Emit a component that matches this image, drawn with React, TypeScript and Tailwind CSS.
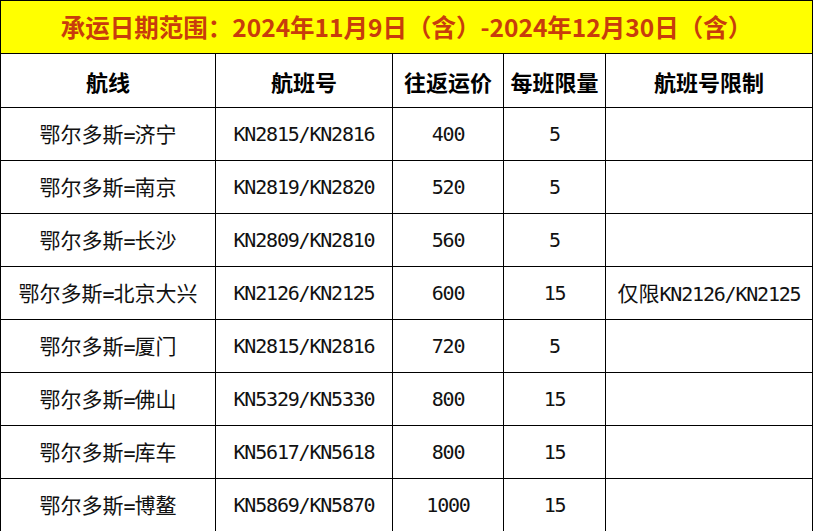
import React from 'react';

interface Route {
  route: string;
  flights: string;
  price: string;
  limit: string;
  note: string;
}

const routes: Route[] = [
  { route: '鄂尔多斯=济宁', flights: 'KN2815/KN2816', price: '400', limit: '5', note: '' },
  { route: '鄂尔多斯=南京', flights: 'KN2819/KN2820', price: '520', limit: '5', note: '' },
  { route: '鄂尔多斯=长沙', flights: 'KN2809/KN2810', price: '560', limit: '5', note: '' },
  { route: '鄂尔多斯=北京大兴', flights: 'KN2126/KN2125', price: '600', limit: '15', note: '仅限KN2126/KN2125' },
  { route: '鄂尔多斯=厦门', flights: 'KN2815/KN2816', price: '720', limit: '5', note: '' },
  { route: '鄂尔多斯=佛山', flights: 'KN5329/KN5330', price: '800', limit: '15', note: '' },
  { route: '鄂尔多斯=库车', flights: 'KN5617/KN5618', price: '800', limit: '15', note: '' },
  { route: '鄂尔多斯=博鳌', flights: 'KN5869/KN5870', price: '1000', limit: '15', note: '' },
];

const headers = ['航线', '航班号', '往返运价', '每班限量', '航班号限制'];

// latin runs get a narrow half-width face, like the source sheet
function Mixed({ text }: { text: string }) {
  const parts = text.split(/([\x00-\x7f]+)/).filter(Boolean);
  return (
    <span className="whitespace-nowrap">
      {parts.map((p, i) =>
        /^[\x00-\x7f]+$/.test(p) ? (
          <span key={i} className="font-['DejaVu_Sans_Mono',monospace] text-[20px] tracking-[-1.2px]">
            {p}
          </span>
        ) : (
          <span key={i}>{p}</span>
        )
      )}
    </span>
  );
}

const cell = 'flex items-center justify-center border-r border-b border-black';

export default function App() {
  return (
    <div className="w-[813px] h-[531px] bg-white font-['Noto_Sans_CJK_SC',sans-serif] text-[#111] overflow-hidden">
      <div className="border-l border-t border-black">
        <div className="h-[53px] flex items-center justify-center bg-[#ffff00] border-r border-b border-black text-[24.5px] font-bold text-[#c83c0c] leading-none">
          承运日期范围：2024年11月9日（含）-2024年12月30日（含）
        </div>
        <div className="grid grid-cols-[215px_177px_111px_102px_1fr]">
          {headers.map((h) => (
            <div key={h} className={`${cell} h-[54px] text-[22px] font-bold leading-none text-black`}>
              {h}
            </div>
          ))}
          {routes.map((r, i) => (
            <React.Fragment key={i}>
              <div className={`${cell} h-[53px] text-[21px] leading-none`}>
                <Mixed text={r.route} />
              </div>
              <div className={`${cell} h-[53px] leading-none`}>
                <Mixed text={r.flights} />
              </div>
              <div className={`${cell} h-[53px] leading-none`}>
                <Mixed text={r.price} />
              </div>
              <div className={`${cell} h-[53px] leading-none`}>
                <Mixed text={r.limit} />
              </div>
              <div className={`${cell} h-[53px] text-[21px] leading-none`}>
                <Mixed text={r.note} />
              </div>
            </React.Fragment>
          ))}
        </div>
      </div>
    </div>
  );
}
